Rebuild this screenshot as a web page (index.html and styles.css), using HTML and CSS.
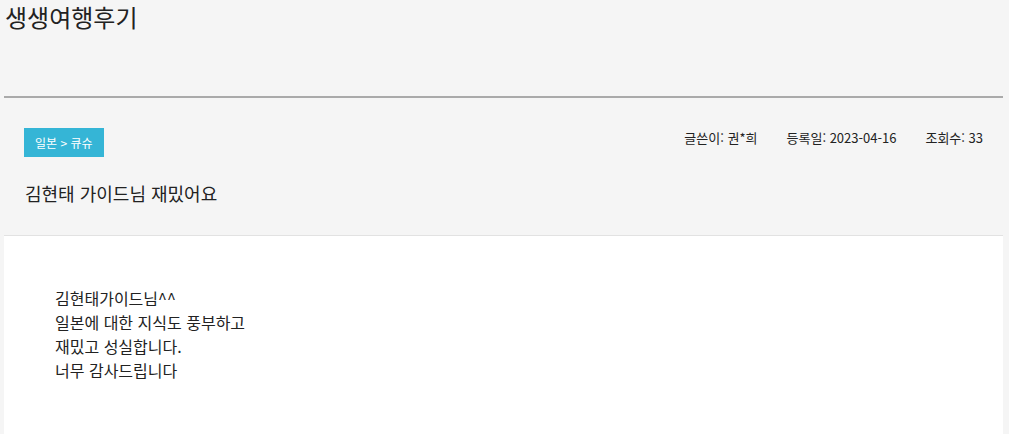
FILE: index.html
```html
<!DOCTYPE html>
<html lang="ko">
<head>
    <meta charset="UTF-8">
    <meta name="viewport" content="width=device-width, initial-scale=1.0">
    <title>생생여행후기</title>
    <link rel="stylesheet" href="styles.css">
</head>
<body>
    <div class="wrap">
        <div class="page-title">
            <h1>생생여행후기</h1>
        </div>

        <div class="review-head">
            <div class="head-top">
                <span class="badge">일본 &gt; 큐슈</span>
                <ul class="meta">
                    <li>글쓴이: 권*희</li>
                    <li>등록일: 2023-04-16</li>
                    <li>조회수: 33</li>
                </ul>
            </div>
            <h2 class="subject">김현태 가이드님 재밌어요</h2>
        </div>

        <div class="review-body">
            <p>김현태가이드님^^<br>
            일본에 대한 지식도 풍부하고<br>
            재밌고 성실합니다.<br>
            너무 감사드립니다</p>
        </div>
    </div>
</body>
</html>
```

FILE: styles.css
```css
body {
    font-family: "Noto Sans CJK KR", "Noto Sans", sans-serif;
    margin: 0;
    padding: 0;
    background-color: #f5f5f5;
    color: #222;
}
.wrap {
    padding: 0 6px 0 4px;
}
.page-title {
    height: 96px;
    border-bottom: 2px solid #aaa;
}
.page-title h1 {
    margin: 0;
    padding: 0 0 0 1px;
    font-size: 24px;
    font-weight: normal;
    line-height: 34px;
    color: #222;
}
.review-head {
    padding: 30px 20px 29px;
    border-bottom: 1px solid #e2e2e2;
}
.head-top {
    display: flex;
    justify-content: space-between;
    align-items: flex-start;
}
.badge {
    display: inline-block;
    height: 29px;
    line-height: 29px;
    padding: 0 11px;
    background: #35b5d6;
    color: white;
    font-size: 12px;
}
.meta {
    display: flex;
    gap: 29px;
    margin: 0;
    padding: 0;
    list-style: none;
    font-size: 13px;
    line-height: 20px;
    color: #222;
}
.subject {
    margin: 23px 0 0 1px;
    font-size: 18px;
    font-weight: normal;
    line-height: 26px;
    color: #222;
}
.review-body {
    box-sizing: border-box;
    background: white;
    min-height: 198px;
    padding: 50px 51px 0;
}
.review-body p {
    margin: 0;
    font-size: 16px;
    line-height: 24px;
    color: #222;
}
```
